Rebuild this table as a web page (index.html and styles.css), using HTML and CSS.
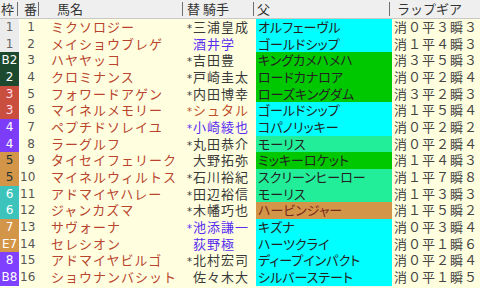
FILE: index.html
```html
<!DOCTYPE html>
<html lang="ja">
<head>
<meta charset="utf-8">
<link rel="stylesheet" href="styles.css">
</head>
<body>
<div class="sheet">
  <div class="row head">
    <div class="c waku">枠</div>
    <div class="c num">番</div>
    <div class="c name">馬名</div>
    <div class="c jockey">替&nbsp;騎手</div>
    <div class="c sire">父</div>
    <div class="c lap">ラップギア</div>
  </div>

  <div class="row"><div class="c waku w1">1</div><div class="c num">1</div><div class="c name">ミクソロジー</div><div class="c jockey"><i>*</i>三浦皇成</div><div class="c sire s-cy">オルフェーヴル</div><div class="c lap">消０平３瞬３</div></div>
  <div class="row"><div class="c waku w1">1</div><div class="c num">2</div><div class="c name">メイショウブレゲ</div><div class="c jockey blue"><i></i>酒井学</div><div class="c sire s-cy">ゴールドシップ</div><div class="c lap">消１平４瞬３</div></div>
  <div class="row"><div class="c waku w2">B2</div><div class="c num">3</div><div class="c name">ハヤヤッコ</div><div class="c jockey"><i>*</i>吉田豊</div><div class="c sire s-gr">キングカメハメハ</div><div class="c lap">消３平５瞬３</div></div>
  <div class="row"><div class="c waku w2">2</div><div class="c num">4</div><div class="c name">クロミナンス</div><div class="c jockey"><i>*</i>戸崎圭太</div><div class="c sire s-gr">ロードカナロア</div><div class="c lap">消０平２瞬４</div></div>
  <div class="row"><div class="c waku w3">3</div><div class="c num">5</div><div class="c name">フォワードアゲン</div><div class="c jockey"><i>*</i>内田博幸</div><div class="c sire s-gr">ローズキングダム</div><div class="c lap">消３平２瞬３</div></div>
  <div class="row"><div class="c waku w3">3</div><div class="c num">6</div><div class="c name">マイネルメモリー</div><div class="c jockey red"><i>*</i>シュタル</div><div class="c sire s-cy">ゴールドシップ</div><div class="c lap">消１平５瞬４</div></div>
  <div class="row"><div class="c waku w4">4</div><div class="c num">7</div><div class="c name">ペプチドソレイユ</div><div class="c jockey blue"><i>*</i>小崎綾也</div><div class="c sire s-cy">コパノリッキー</div><div class="c lap">消０平２瞬２</div></div>
  <div class="row"><div class="c waku w4">4</div><div class="c num">8</div><div class="c name">ラーグルフ</div><div class="c jockey"><i>*</i>丸田恭介</div><div class="c sire s-sg">モーリス</div><div class="c lap">消０平２瞬４</div></div>
  <div class="row"><div class="c waku w5">5</div><div class="c num">9</div><div class="c name">タイセイフェリーク</div><div class="c jockey"><i></i>大野拓弥</div><div class="c sire s-gr">ミッキーロケット</div><div class="c lap">消１平４瞬３</div></div>
  <div class="row"><div class="c waku w5">5</div><div class="c num">10</div><div class="c name">マイネルウィルトス</div><div class="c jockey"><i>*</i>石川裕紀</div><div class="c sire s-sg">スクリーンヒーロー</div><div class="c lap">消１平７瞬８</div></div>
  <div class="row"><div class="c waku w6">6</div><div class="c num">11</div><div class="c name">アドマイヤハレー</div><div class="c jockey"><i>*</i>田辺裕信</div><div class="c sire s-sg">モーリス</div><div class="c lap">消１平３瞬３</div></div>
  <div class="row"><div class="c waku w6">6</div><div class="c num">12</div><div class="c name">ジャンカズマ</div><div class="c jockey"><i>*</i>木幡巧也</div><div class="c sire s-or">ハービンジャー</div><div class="c lap">消１平５瞬２</div></div>
  <div class="row"><div class="c waku w7">7</div><div class="c num">13</div><div class="c name">サヴォーナ</div><div class="c jockey blue"><i>*</i>池添謙一</div><div class="c sire s-cy">キズナ</div><div class="c lap">消０平３瞬４</div></div>
  <div class="row"><div class="c waku w7">E7</div><div class="c num">14</div><div class="c name">セレシオン</div><div class="c jockey blue"><i></i>荻野極</div><div class="c sire s-cy">ハーツクライ</div><div class="c lap">消０平１瞬６</div></div>
  <div class="row"><div class="c waku w8">8</div><div class="c num">15</div><div class="c name">アドマイヤビルゴ</div><div class="c jockey"><i>*</i>北村宏司</div><div class="c sire s-cy">ディープインパクト</div><div class="c lap">消０平２瞬４</div></div>
  <div class="row"><div class="c waku w8">B8</div><div class="c num">16</div><div class="c name">ショウナンバシット</div><div class="c jockey"><i></i>佐々木大</div><div class="c sire s-cy">シルバーステート</div><div class="c lap">消０平１瞬５</div></div>
</div>
</body>
</html>
```

FILE: styles.css
```css
html, body {
  margin: 0;
  padding: 0;
  background: #ffffe0;
}
.sheet {
  width: 480px;
  height: 288px;
  overflow: hidden;
  background: #ffffe0;
  font-family: "Noto Sans CJK JP", "DejaVu Sans", sans-serif;
  font-size: 13px;
  color: #333;
}
.row {
  display: grid;
  grid-template-columns: 20px 21px 144px 71px 136px 88px;
  height: 16.67px;
  line-height: 16.67px;
}
.c {
  white-space: nowrap;
  box-sizing: border-box;
}
.head {
  height: 19px;
  line-height: 18px;
  background: #efefef;
  border-bottom: 1px solid #c8c8c8;
  box-sizing: border-box;
}
.head .c {
  color: #333;
  background: linear-gradient(#6f6f6f, #6f6f6f) right 2px top 2px / 1px 14px no-repeat;
}
.head .c.lap { background: none; }
.head .waku { text-align: left; padding-left: 1px; }
.head .num { text-align: center; }
.head .name { padding-left: 16px; }
.head .jockey { padding-left: 2px; }
.head .sire { padding-left: 1px; }
.head .lap { padding-left: 5px; }

.waku {
  text-align: center;
  font-family: "DejaVu Sans", sans-serif;
  font-size: 12px;
  border-bottom: 1px solid #fff;
  border-right: 1px solid #fff;
}
.head .waku {
  font-family: "Noto Sans CJK JP", sans-serif;
  font-size: 13px;
  border: none;
}
.w1 { background: #ececec; color: #666; }
.w2 { background: #1d4a2e; color: #fff; }
.w3 { background: #c94e3e; color: #fde; }
.w4 { background: #7d3cf8; color: #fff; }
.w5 { background: #d39548; color: #233; }
.w6 { background: #3cc4bc; color: #fff; }
.w7 { background: #d39548; color: #fff; }
.w8 { background: #8040ff; color: #fff; }

.num {
  text-align: right;
  padding-right: 6px;
  font-family: "DejaVu Sans", sans-serif;
  font-size: 12px;
  color: #555;
}
.head .num {
  font-family: "Noto Sans CJK JP", sans-serif;
  font-size: 13px;
  padding-right: 0;
}
.name {
  padding-left: 10px;
  letter-spacing: 1px;
  color: #b9432c;
}
.head .name { color: #333; letter-spacing: 0; }
.jockey {
  padding-left: 2px;
  letter-spacing: 1px;
  color: #3a3a3a;
}
.jockey i {
  display: inline-block;
  width: 6px;
  font-style: normal;
  letter-spacing: 0;
  font-family: "DejaVu Sans", sans-serif;
  font-size: 10px;
}
.jockey.blue { color: #5a2df0; }
.jockey.red { color: #c0502a; }
.head .jockey { letter-spacing: 0; }
.sire {
  padding-left: 2px;
  font-feature-settings: "palt";
  border-bottom: 1px solid #f4f4f4;
  color: #222;
}
.head .sire { font-feature-settings: normal; border: none; }
.s-cy { background: #00ffff; }
.s-gr { background: #00c800; }
.s-sg { background: #22ee99; }
.s-or { background: #d39548; color: #7a2a1a; }
.lap {
  padding-left: 2px;
  letter-spacing: 1px;
  color: #444;
}
.head .lap { letter-spacing: 0; }
```
